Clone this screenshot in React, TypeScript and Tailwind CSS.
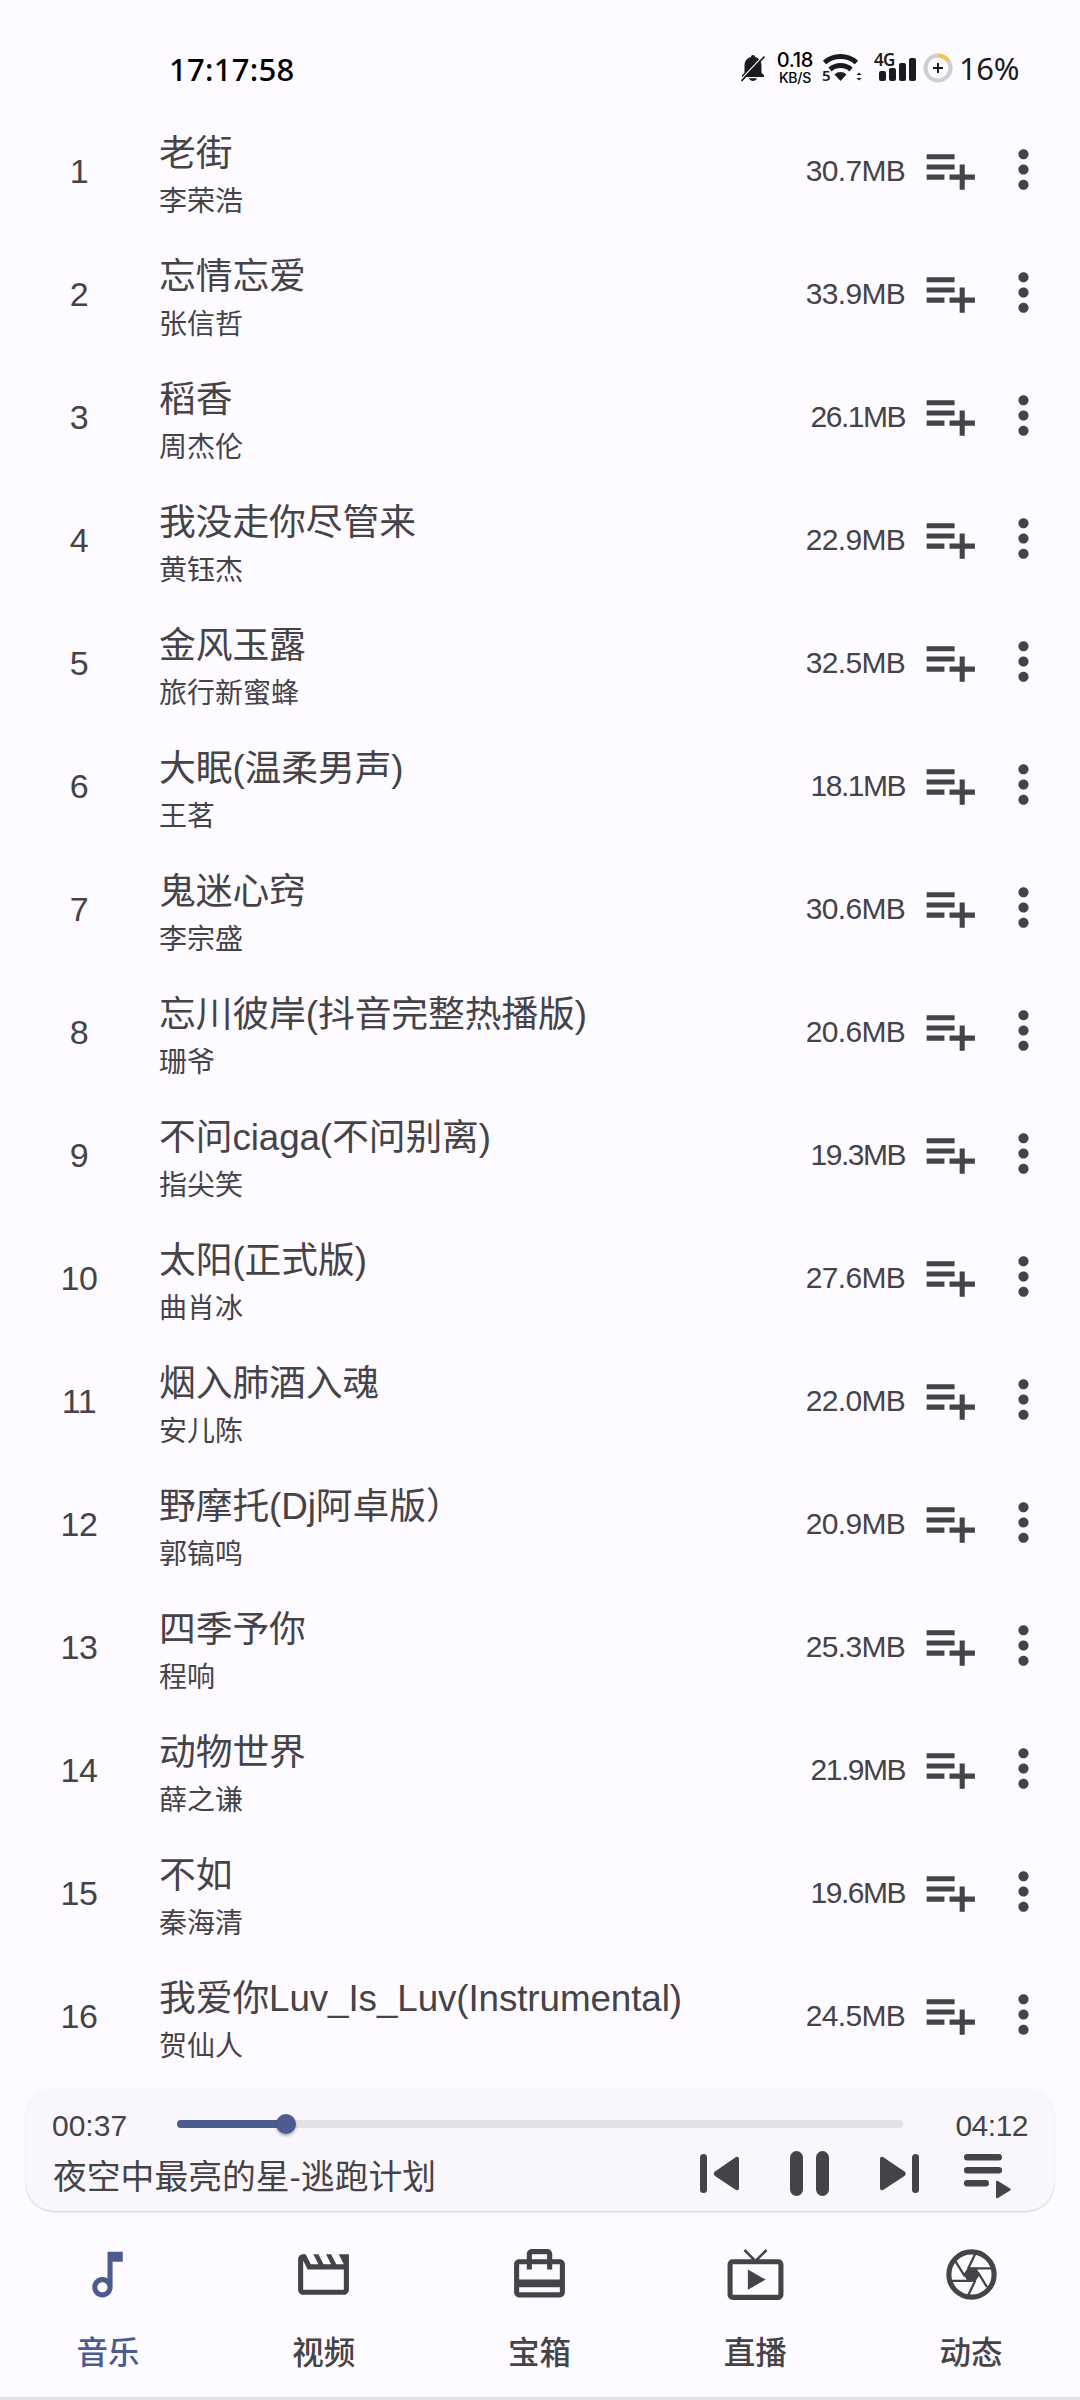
import React from "react";
import {
  MdLiveTv,
  MdMoreVert,
  MdOutlineAudiotrack,
  MdOutlineCardTravel,
  MdOutlineMovie,
  MdPlaylistAdd,
} from "react-icons/md";

const songs = [
  { title: "老街", artist: "李荣浩", size: "30.7MB" },
  { title: "忘情忘爱", artist: "张信哲", size: "33.9MB" },
  { title: "稻香", artist: "周杰伦", size: "26.1MB" },
  { title: "我没走你尽管来", artist: "黄钰杰", size: "22.9MB" },
  { title: "金风玉露", artist: "旅行新蜜蜂", size: "32.5MB" },
  { title: "大眠(温柔男声)", artist: "王茗", size: "18.1MB" },
  { title: "鬼迷心窍", artist: "李宗盛", size: "30.6MB" },
  { title: "忘川彼岸(抖音完整热播版)", artist: "珊爷", size: "20.6MB" },
  { title: "不问ciaga(不问别离)", artist: "指尖笑", size: "19.3MB" },
  { title: "太阳(正式版)", artist: "曲肖冰", size: "27.6MB" },
  { title: "烟入肺酒入魂", artist: "安儿陈", size: "22.0MB" },
  { title: "野摩托(Dj阿卓版）", artist: "郭镐鸣", size: "20.9MB" },
  { title: "四季予你", artist: "程响", size: "25.3MB" },
  { title: "动物世界", artist: "薛之谦", size: "21.9MB" },
  { title: "不如", artist: "秦海清", size: "19.6MB" },
  { title: "我爱你Luv_Is_Luv(Instrumental)", artist: "贺仙人", size: "24.5MB" },
];

const ApertureIcon = () => (
  <svg viewBox="0 0 24 24" className="size-[61px]" fill="none" stroke="currentColor">
    <circle cx="12" cy="12" r="8.9" strokeWidth="2" />
    <path
      d="M9.400 12.700 5.500 6.500M10.700 9.600 13.500 3.800M11.300 9.600H20M14.600 11.200l3.500 5.800M13.500 14.400 10.700 20.200M12.500 14.500H4.200"
      strokeWidth="0.9"
    />
    <path d="M10.700 9.600h3l1.300 2.400-1.700 2.500h-2.600L9.200 12z" fill="currentColor" strokeWidth="0.6" />
  </svg>
);

const tabs = [
  { label: "音乐", icon: <MdOutlineAudiotrack className="size-[61px]" />, active: true },
  { label: "视频", icon: <MdOutlineMovie className="size-[61px]" /> },
  { label: "宝箱", icon: <MdOutlineCardTravel className="size-[61px]" /> },
  { label: "直播", icon: <MdLiveTv className="size-[61px]" /> },
  { label: "动态", icon: <ApertureIcon /> },
];

const StatusBar = () => (
  <header className="flex h-[108px] items-start justify-between pl-[169px] pr-[61px] pt-[47px] font-['Noto_Sans',sans-serif] text-black">
    <span className="text-[31px] font-medium leading-[44px] tracking-[0.3px]">17:17:58</span>
    <div className="flex h-[42px] items-center text-[#1b1a1d]">
      <svg viewBox="0 0 24 28" className="h-[28px] w-[24px]">
        <path
          d="M12 1c1.200 0 2 .8 2 1.900C18.500 4 20.500 7.500 20.500 11.500v7l2.500 3v1.500H1v-1.500l2.500-3v-7C3.500 7.500 5.500 4 10 2.900 10 1.800 10.800 1 12 1zM8 24.300h8c-.7 1.800-2.200 2.700-4 2.700s-3.300-.9-4-2.700z"
          fill="currentColor"
        />
        <path d="M0 25.500 22.500 1.500" stroke="#fdfbff" strokeWidth="1.2" />
        <path d="M0.500 27 23.500 2.500" stroke="currentColor" strokeWidth="1.8" />
      </svg>
      <div className="ml-[11px] flex w-[38px] flex-col items-center whitespace-nowrap font-['Inter',sans-serif] font-medium text-black">
        <span className="text-[20px] leading-[17px] tracking-[-0.3px]">0.18</span>
        <span className="mt-[1px] text-[14px] leading-[15px] tracking-[-0.3px]">KB/S</span>
      </div>
      <div className="ml-[8px] flex h-[30px] items-end">
        <span className="w-[7px] text-[15px] font-semibold leading-[15px]">5</span>
        <svg viewBox="4 0 38 30" className="-ml-[4px] h-[30px] w-[38px] overflow-visible">
          <g fill="none" stroke="currentColor" strokeWidth="5">
            <path d="M3.500 9.500a24 24 0 0 1 32 0" />
            <path d="M9 16.500a16 16 0 0 1 21 0" />
          </g>
          <path d="M19.500 28 13.500 21.500a8.500 8.500 0 0 1 12 0z" fill="currentColor" />
          <path d="M35.500 22 38 19.500l2.500 2.500zM35.500 25l2.500 2.500 2.500-2.500z" fill="currentColor" />
        </svg>
      </div>
      <div className="relative ml-[11px] flex h-[30px] w-[42px] items-end justify-end gap-[3px] pb-[2px]">
        <i className="h-[10px] w-[7px] rounded-[2px] bg-current" />
        <i className="h-[13px] w-[7px] rounded-[2px] bg-current" />
        <i className="h-[18px] w-[7px] rounded-[2px] bg-current" />
        <i className="h-[23px] w-[7px] rounded-[2px] bg-current" />
        <span className="absolute left-0 top-[-2px] text-[17px] font-semibold leading-[17px] tracking-[-0.8px]">
          4G
        </span>
      </div>
      <svg viewBox="0 0 30 30" className="ml-[7px] size-[30px]" fill="none">
        <circle cx="15" cy="15" r="12.5" stroke="#cfced2" strokeWidth="4" />
        <path d="M15 2.500A12.500 12.500 0 0 1 25.500 8.300" stroke="#f3c54e" strokeWidth="4" />
        <path d="M15 10v10M10 15h10" stroke="currentColor" strokeWidth="2" />
      </svg>
      <span className="ml-[6px] text-[31px] leading-[44px] tracking-[-0.4px]">16%</span>
    </div>
  </header>
);

interface SongRowProps {
  index: number;
  title: string;
  artist: string;
  size: string;
}

const SongRow = ({ index, title, artist, size }: SongRowProps) => (
  <li className="flex h-[123px] items-center pr-[26px]">
    <span className="w-[158px] pt-[3px] text-center text-[34px] leading-none tracking-[-0.5px]">
      {index}
    </span>
    <div className="flex-1 pl-[1px] pt-[13px]">
      <p className="text-[36.8px] leading-[50px] tracking-[-0.1px]">{title}</p>
      <p className="text-[28px] leading-[45px]">{artist}</p>
    </div>
    <span
      className={`mr-[14px] pt-[3px] text-[30px] leading-none ${
        size.includes("1") ? "tracking-[-1.5px]" : "tracking-[-0.7px]"
      }`}
    >
      {size}
    </span>
    <MdPlaylistAdd className="mr-[13px] size-[61px]" />
    <MdMoreVert className="size-[61px]" />
  </li>
);

const Player = () => (
  <section className="mx-[26px] h-[123px] rounded-[28px] bg-[#faf7fc] px-[26px] shadow-[0_1px_2px_rgba(0,0,0,0.18)]">
    <div className="flex h-[72px] items-center text-[30px] leading-none">
      <span className="w-[125px] pt-[3px]">00:37</span>
      <div className="relative h-[8px] w-[726px] rounded-full bg-[#e3e1e6]">
        <div className="h-full w-[15%] rounded-full bg-[#4c5c8c]" />
        <div className="absolute left-[99px] top-[-6px] size-[20px] rounded-full bg-[#4f5a92] shadow-[0_2px_3px_rgba(0,0,0,0.3)]" />
      </div>
      <span className="flex-1 pt-[3px] text-right tracking-[-0.5px]">04:12</span>
    </div>
    <div className="flex h-[32px] items-center justify-between">
      <p className="pl-px pt-[3px] text-[33.8px] leading-none">夜空中最亮的星-逃跑计划</p>
      <svg viewBox="0 0 312 48" className="mr-[16px] mt-[-7px] h-[48px] w-[312px] overflow-visible" fill="currentColor">
        <rect x="0" y="5" width="7" height="39" rx="3.5" />
        <path d="M15 22.500 36 8q3-1 3 2v29q0 3-3 2L15 27q-2.500-2.300 0-4.500z" />
        <rect x="90" y="2" width="13" height="45" rx="6.5" />
        <rect x="116" y="2" width="13" height="45" rx="6.5" />
        <path d="M204.500 22.500 183 8q-3-1-3 2v29q0 3 3 2l21.500-14q2.500-2.300 0-4.500z" />
        <rect x="212" y="5" width="7" height="39" rx="3.5" />
        <rect x="264" y="5" width="38" height="6.5" rx="3.2" />
        <rect x="264" y="18" width="38" height="6.5" rx="3.2" />
        <rect x="264" y="31" width="25" height="6.5" rx="3.2" />
        <path d="M296 33q0-2 2-1l12 7.500q1.500 1 0 2L298 49q-2 1-2-1z" />
      </svg>
    </div>
  </section>
);

const TabBar = () => (
  <nav className="mt-auto grid h-[189px] w-full grid-cols-5 border-b-[3px] border-[#e3e1e6] pr-[1px] pt-[33px]">
    {tabs.map((tab) => (
      <div
        key={tab.label}
        className={`flex flex-col items-center ${tab.active ? "text-[#4c5c8c]" : ""}`}
      >
        {tab.icon}
        <span className="mt-[26px] text-[31.5px] font-medium leading-[44px]">{tab.label}</span>
      </div>
    ))}
  </nav>
);

const App = () => {
  return (
    <main className="flex h-[2400px] w-[1080px] flex-col overflow-hidden bg-[#fdfbff] font-['Liberation_Sans','Noto_Sans_CJK_SC',sans-serif] text-[#454348]">
      <StatusBar />
      <ul className="h-[1980px]">
        {songs.map((song, index) => (
          <SongRow key={song.title} index={index + 1} {...song} />
        ))}
      </ul>
      <Player />
      <TabBar />
    </main>
  );
};

export default App;
